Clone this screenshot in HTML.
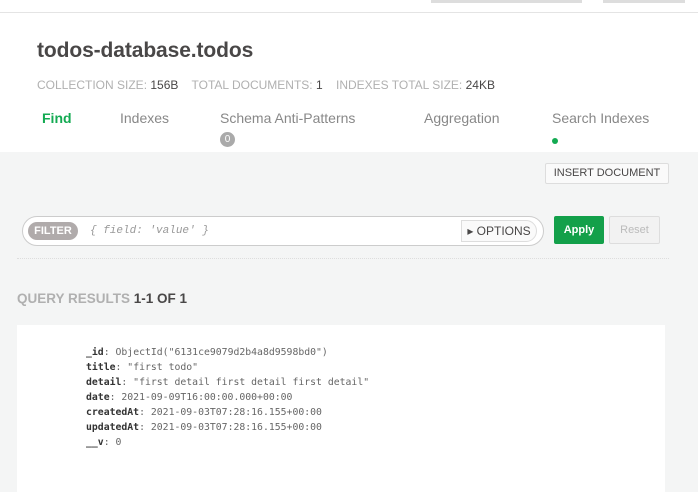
<!DOCTYPE html>
<html><head><style>
*{margin:0;padding:0;box-sizing:border-box}
html,body{width:698px;height:492px;overflow:hidden}
body{background:#f4f5f5;font-family:"Liberation Sans",sans-serif;position:relative}
.top{position:absolute;left:0;top:0;width:698px;height:152px;background:#fff}
.line{position:absolute;left:0;top:12px;width:698px;height:1px;background:#e4e4e4}
.stub{position:absolute;top:0;height:3px;background:#ddd}
.title{position:absolute;left:37px;top:39px;font-size:21px;font-weight:bold;color:#494747;letter-spacing:-0.1px}
.stats{position:absolute;left:37px;top:78px;font-size:12px;color:#b0b0b0;white-space:nowrap}
.stats b{font-weight:normal;color:#494747}
.tab{position:absolute;top:110px;font-size:14px;color:#888}
.badge{position:absolute;left:220px;top:132px;width:15px;height:15px;border-radius:50%;background:#aaa;color:#fff;font-size:10px;text-align:center;line-height:15px}
.dot{position:absolute;left:552px;top:138px;width:6px;height:6px;border-radius:50%;background:#13aa52}
.ins{position:absolute;left:545px;top:163px;width:124px;height:21px;border:1px solid #ddd;background:#fafafa;font-size:11px;color:#494747;text-align:center;line-height:19px;border-radius:2px}
.bar{position:absolute;left:22px;top:216px;width:522px;height:30px;border:1px solid #ccc;border-radius:15px;background:#fff}
.filt{position:absolute;left:28px;top:222px;width:50px;height:18px;border-radius:9px;background:#b0abab;color:#fff;font-size:11px;font-weight:bold;line-height:18px;text-align:center}
.ph{position:absolute;left:90px;top:225px;font-family:"Liberation Mono",monospace;font-style:italic;font-size:11px;color:#999}
.opt{position:absolute;left:461px;top:220px;width:76px;height:22px;border:1px solid #ddd;background:#fafafa;font-size:12px;color:#494747;line-height:20px;text-align:center;border-radius:0 11px 11px 0}
.apply{position:absolute;left:554px;top:216px;width:50px;height:28px;background:#13a04a;color:#fff;font-size:11px;font-weight:bold;text-align:center;line-height:28px;border-radius:2px}
.reset{position:absolute;left:609px;top:216px;width:51px;height:28px;border:1px solid #ddd;background:#f2f2f2;color:#bbb;font-size:11px;text-align:center;line-height:26px;border-radius:2px}
.dash{position:absolute;left:17px;top:258px;width:652px;border-top:1px dotted #ddd}
.qr{position:absolute;left:17px;top:291px;font-size:13.5px;font-weight:bold;color:#b0b0b0}
.qr span{color:#494747}
.card{position:absolute;left:17px;top:325px;width:648px;height:167px;background:#fff}
.doc{position:absolute;left:86px;top:345px;font-family:"DejaVu Sans Mono","Liberation Mono",monospace;font-size:9.8px;line-height:15px;color:#666;white-space:pre}
.doc b{color:#333}
</style></head><body>
<div class="top"></div>
<div class="line"></div>
<div class="stub" style="left:431px;width:151px"></div>
<div class="stub" style="left:603px;width:82px"></div>
<div class="title">todos-database.todos</div>
<div class="stats">COLLECTION SIZE: <b>156B</b> &nbsp;&nbsp; TOTAL DOCUMENTS: <b>1</b> &nbsp;&nbsp; INDEXES TOTAL SIZE: <b>24KB</b></div>
<div class="tab" style="left:42px;color:#13aa52;font-weight:bold">Find</div>
<div class="tab" style="left:120px">Indexes</div>
<div class="tab" style="left:220px">Schema Anti-Patterns</div>
<div class="tab" style="left:424px">Aggregation</div>
<div class="tab" style="left:552px">Search Indexes</div>
<div class="badge">0</div>
<div class="dot"></div>
<div class="ins">INSERT DOCUMENT</div>
<div class="bar"></div>
<div class="filt">FILTER</div>
<div class="ph">{ field: 'value' }</div>
<div class="opt">▸ OPTIONS</div>
<div class="apply">Apply</div>
<div class="reset">Reset</div>
<div class="dash"></div>
<div class="qr">QUERY RESULTS <span>1-1 OF 1</span></div>
<div class="card"></div>
<div class="doc"><b>_id</b>: ObjectId("6131ce9079d2b4a8d9598bd0")
<b>title</b>: "first todo"
<b>detail</b>: "first detail first detail first detail"
<b>date</b>: 2021-09-09T16:00:00.000+00:00
<b>createdAt</b>: 2021-09-03T07:28:16.155+00:00
<b>updatedAt</b>: 2021-09-03T07:28:16.155+00:00
<b>__v</b>: 0</div>
</body></html>
